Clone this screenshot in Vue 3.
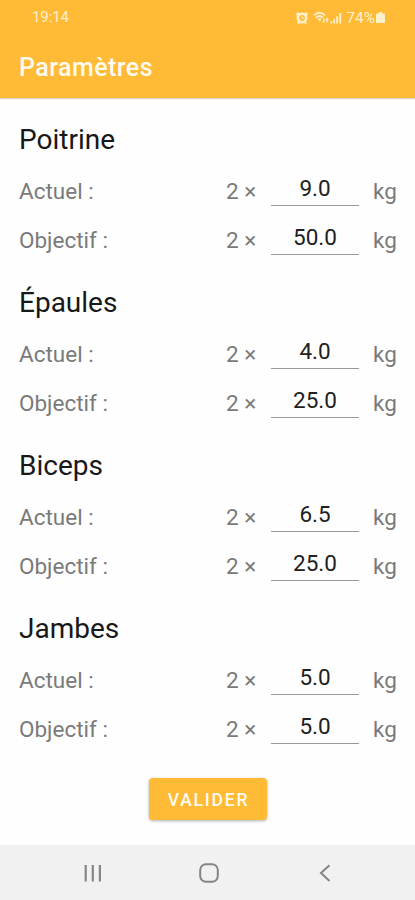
<script setup>
import { reactive } from 'vue'

const groups = reactive([
  { name: 'Poitrine', fields: [{ label: 'Actuel :', value: '9.0' }, { label: 'Objectif :', value: '50.0' }] },
  { name: 'Épaules', fields: [{ label: 'Actuel :', value: '4.0' }, { label: 'Objectif :', value: '25.0' }] },
  { name: 'Biceps', fields: [{ label: 'Actuel :', value: '6.5' }, { label: 'Objectif :', value: '25.0' }] },
  { name: 'Jambes', fields: [{ label: 'Actuel :', value: '5.0' }, { label: 'Objectif :', value: '5.0' }] },
])
</script>

<template>
  <div class="screen">
    <header class="top">
      <div class="status">
        <span class="clock">19:14</span>
        <div class="indicators">
          <svg class="alarm" width="12" height="12" viewBox="0 0 12 12">
            <path d="M.5 3 3 .7M9 .7 11.500 3M2 11.500l1.500-2M10 11.500l-1.500-2" stroke="currentColor" stroke-width="2" fill="none" />
            <circle cx="6" cy="6" r="4.200" fill="none" stroke="currentColor" stroke-width="2.600" />
            <path d="M6 3.900v2.300h1.900" stroke="currentColor" stroke-width="1" fill="none" />
          </svg>
          <svg class="wifi" width="16" height="13" viewBox="0 0 16 13">
            <path d="M.8 4.300Q6.500-.8 12.200 4.300M3 6.600Q6.500 3.500 10 6.600" stroke="currentColor" stroke-width="1.800" fill="none" />
            <path d="M4.400 8Q6.500 6.400 8.600 8L6.800 10.600Z" fill="currentColor" />
            <path d="M11 7.500v4M14 7.500v4M9.800 10l1.200 1.500M12.800 9l1.200-1.500L15.200 9" stroke="currentColor" stroke-width="1.200" fill="none" />
          </svg>
          <svg class="signal" width="12" height="12" viewBox="0 0 12 12">
            <path d="M1.200 9.300v2.200M4.200 7.300v4.200M7.200 4.300v7.200M10.200 1v10.500" stroke="currentColor" stroke-width="1.900" />
          </svg>
          <span class="percent">74%</span>
          <svg class="battery" width="9" height="11" viewBox="0 0 9 11">
            <path d="M2.800 0h3.400v1.400H8a1 1 0 0 1 1 1V10a1 1 0 0 1-1 1H1a1 1 0 0 1-1-1V2.400a1 1 0 0 1 1-1h1.800z" fill="currentColor" />
          </svg>
        </div>
      </div>
      <h1 class="title">Paramètres</h1>
    </header>

    <main class="content">
      <section v-for="group in groups" :key="group.name" class="group">
        <h2 class="name">{{ group.name }}</h2>
        <div v-for="field in group.fields" :key="field.label" class="row">
          <span class="label">{{ field.label }}</span>
          <span class="factor">2 ×</span>
          <input v-model="field.value" class="value" type="text" inputmode="decimal" />
          <span class="unit">kg</span>
        </div>
      </section>
      <button class="submit" type="button">VALIDER</button>
    </main>

    <nav class="nav">
      <svg width="20" height="20" viewBox="0 0 20 20">
        <path d="M2.700 2v16.500M9.800 2v16.500M16.900 2v16.500" stroke="currentColor" stroke-width="2.200" />
      </svg>
      <svg width="20" height="20" viewBox="0 0 20 20">
        <rect x="1.200" y="1.200" width="17.600" height="17.600" rx="5.800" fill="none" stroke="currentColor" stroke-width="2" />
      </svg>
      <svg width="20" height="20" viewBox="0 0 20 20">
        <path d="M14.500 2.300 6 10l8.500 7.900" fill="none" stroke="currentColor" stroke-width="2" />
      </svg>
    </nav>
  </div>
</template>

<style>
body {
  margin: 0;
  background: #fefefe;
}
</style>

<style scoped>
.screen {
  display: flex;
  flex-direction: column;
  height: 900px;
  overflow: hidden;
  font-family: Roboto, "Liberation Sans", sans-serif;
  background: #fefefe;
}
.top {
  flex: none;
  height: 98px;
  box-sizing: border-box;
  background: #ffbb35;
  color: #fffaf0;
  box-shadow: 0 1px 1px rgba(120, 90, 30, 0.25);
}
.status {
  display: flex;
  justify-content: space-between;
  align-items: center;
  height: 35px;
  padding: 0 30px 0 32px;
  color: #fff0cc;
}
.clock {
  font-size: 15px;
  line-height: 35px;
  letter-spacing: -0.1px;
}
.indicators {
  display: flex;
  align-items: center;
}
.wifi {
  margin-left: 5px;
}
.signal {
  margin-left: 1px;
}
.percent {
  margin-left: 4px;
  font-size: 15.5px;
}
.battery {
  margin-left: 1px;
}
.title {
  margin: 0;
  padding-left: 19px;
  font-size: 25px;
  font-weight: 500;
  line-height: 66px;
  letter-spacing: 0.45px;
}
.content {
  display: flex;
  flex-direction: column;
  flex: 1;
  padding: 4px 19px 0;
}
.group {
  height: 163px;
}
.name {
  margin: 0;
  height: 65px;
  font-size: 28px;
  font-weight: 400;
  line-height: 76px;
  color: #181818;
}
.row {
  display: flex;
  height: 49px;
  font-size: 22.5px;
  line-height: 49px;
  color: #7a7a7a;
}
.label {
  flex: 1;
}
.factor {
  width: 45px;
}
.value {
  box-sizing: border-box;
  width: 88px;
  height: 29px;
  margin: 10px 0 0;
  padding: 0 0 6px;
  border: 0;
  border-bottom: 1px solid #999;
  border-radius: 0;
  outline: 0;
  background: transparent;
  color: #202020;
  font: inherit;
  line-height: 22px;
  text-align: center;
}
.unit {
  width: 23px;
  margin-left: 14px;
}
.submit {
  align-self: center;
  width: 118px;
  height: 42px;
  margin-top: 24px;
  padding: 2px 0 0 2px;
  border: 0;
  border-radius: 4px;
  background: #ffbb35;
  box-shadow: 0 1px 3px rgba(0, 0, 0, 0.32);
  color: #fffaf0;
  font: 500 17.5px Roboto, sans-serif;
  letter-spacing: 1.8px;
}
.nav {
  display: flex;
  flex: none;
  align-items: center;
  justify-content: space-between;
  height: 55px;
  padding: 0 80px 0 83px;
  background: #f1f1f1;
  color: #858585;
}
</style>
